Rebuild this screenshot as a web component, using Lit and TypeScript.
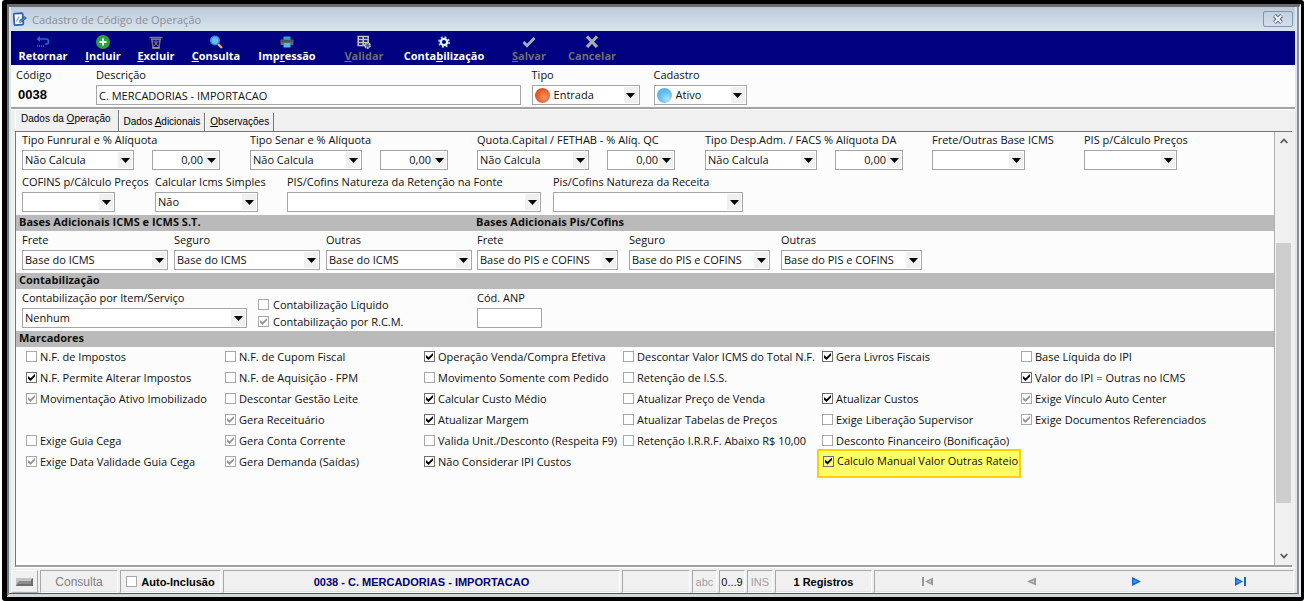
import { LitElement, html, css, svg, nothing } from "lit";
import { customElement } from "lit/decorators.js";
import { classMap } from "lit/directives/class-map.js";

type Mark = [label: string, state: "off" | "on" | "grey"] | null;

const MARKS: Mark[][] = [
  [["N.F. de Impostos", "off"], ["N.F. Permite Alterar Impostos", "on"], ["Movimentação Ativo Imobilizado", "grey"], null, ["Exige Guia Cega", "off"], ["Exige Data Validade Guia Cega", "grey"]],
  [["N.F. de Cupom Fiscal", "off"], ["N.F. de Aquisição - FPM", "off"], ["Descontar Gestão Leite", "off"], ["Gera Receituário", "grey"], ["Gera Conta Corrente", "grey"], ["Gera Demanda (Saídas)", "grey"]],
  [["Operação Venda/Compra Efetiva", "on"], ["Movimento Somente com Pedido", "off"], ["Calcular Custo Médio", "on"], ["Atualizar Margem", "on"], ["Valida Unit./Desconto (Respeita F9)", "off"], ["Não Considerar IPI Custos", "on"]],
  [["Descontar Valor ICMS do Total N.F.", "off"], ["Retenção de I.S.S.", "off"], ["Atualizar Preço de Venda", "off"], ["Atualizar Tabelas de Preços", "off"], ["Retenção I.R.R.F. Abaixo R$ 10,00", "off"]],
  [["Gera Livros Fiscais", "on"], null, ["Atualizar Custos", "on"], ["Exige Liberação Supervisor", "off"], ["Desconto Financeiro (Bonificação)", "off"], ["Calculo Manual Valor Outras Rateio", "on"]],
  [["Base Líquida do IPI", "off"], ["Valor do IPI = Outras no ICMS", "on"], ["Exige Vínculo Auto Center", "grey"], ["Exige Documentos Referenciados", "grey"]],
];
const HIGHLIGHTED = "Calculo Manual Valor Outras Rateio";

const ICONS = {
  back: svg`<path d="M3 4h7.500a1.800 1.800 0 0 1 1.800 1.800v1.400A1.800 1.800 0 0 1 10.500 9H9" fill="none" stroke="#1c6fc4" stroke-width="1.600"/><path d="M0.500 4 4 1v6z" fill="#1c6fc4"/><path d="M1 11h8" stroke="#1c5fb4" stroke-width="2" stroke-dasharray="1 1"/>`,
  add: svg`<circle cx="7" cy="7" r="7" fill="#2ea043"/><path d="M7 3.500v7M3.500 7h7" stroke="#fff" stroke-width="2"/>`,
  trash: svg`<path d="M.5 2.500h13M2 4.200h10M3 5l1 8h6l1-8" fill="none" stroke="#777" stroke-width="1.500"/><path d="m4 5.500 5.500 6M10 5.500l-5.500 6M7 5v3" stroke="#8a8a8a" stroke-width="1"/><path d="M3.500 12.800h7" stroke="#999" stroke-width="1.500"/>`,
  search: svg`<path d="m9 9 4 4" stroke="#e8b94a" stroke-width="2.400"/><circle cx="6" cy="5.500" r="4.300" fill="#6cb8f5" stroke="#2f86dd" stroke-width="1.400"/>`,
  print: svg`<path d="M3.500 1.500h7V5h-7z" fill="#39a0c8"/><path d="M.5 4.500h13v5.500H.5z" fill="#5d6670"/><path d="M3.500 8h7v4.500h-7z" fill="#58b9e6"/><path d="M1.500 6h11" stroke="#3d444c"/>`,
  validate: svg`<path d="M1.200 1.500h10v9h-10zM1.200 4.500h10M1.200 7.500h10M6.200 1.500v9" fill="none" stroke="#c4c4c4" stroke-width="1.500"/><circle cx="10.500" cy="10.500" r="2.500" fill="#555c8c" stroke="#bdbdbd" stroke-width="1.800" stroke-dasharray="2 .6"/>`,
  gear: svg`<circle cx="7" cy="7" r="4.900" fill="none" stroke="#8fd0f5" stroke-width="2" stroke-dasharray="1.950 1.900"/><circle cx="7" cy="7" r="3.200" fill="none" stroke="#e6f5ff" stroke-width="2.200"/>`,
  check: svg`<path d="m1.500 7 3.500 3.700L12.500 3" fill="none" stroke="#a9adb0" stroke-width="2.800"/>`,
  cross: svg`<path d="M2 1.500 12 12M12 1.500 2 12" stroke="#a9adb0" stroke-width="3.200"/>`,
};

const TOOLS: [keyof typeof ICONS, string, string, string, boolean][] = [
  ["back", "Retornar", "", "", true],
  ["add", "", "I", "ncluir", true],
  ["trash", "", "E", "xcluir", true],
  ["search", "", "C", "onsulta", true],
  ["print", "Imp", "r", "essão", true],
  ["validate", "", "V", "alidar", false],
  ["gear", "Conta", "b", "ilização", true],
  ["check", "", "S", "alvar", false],
  ["cross", "Cancelar", "", "", false],
];

@customElement("app-root")
export class AppRoot extends LitElement {
  static styles = css`
    :host {
      display: block;
      box-sizing: border-box;
      height: 100vh;
      padding-left: 2px;
      background: #fff;
      color: #101010;
      font: 11px/16px "Open Sans", "Noto Sans", sans-serif;
    }
    *, *::before { box-sizing: border-box; }
    button, input, select { font: inherit; color: inherit; margin: 0; }
    button { border: 0; padding: 0; background: none; }
    svg { display: block; }
    .frame { height: 100%; border: solid #000; border-width: 4px 3px 4px 5px; border-radius: 3px; background: #f4f4f4; }
    .edge { height: 100%; border: solid; border-width: 3px 2px 3px 2px; border-color: #6c6c6c #f0f0ee #d5d9d8 #777; }
    .window {
      height: 100%;
      display: flex;
      flex-direction: column;
      border-right: 2px solid #8d9096;
      border-bottom: 1px solid #4c5c62;
      padding: 0 2px 2px;
      background: #dbe5f2;
    }
    .title { flex: none; display: flex; align-items: center; gap: 5px; height: 24px; padding: 0 2px; background: linear-gradient(#bccad9, #d8e4f1); color: #8b8f96; }
    .title h1 { flex: 1; margin: 0; padding-top: 2px; font-size: 11px; font-weight: 400; }
    .close { display: grid; place-items: center; width: 30px; height: 16px; border: 1px solid #8296ad; border-radius: 2px; }
    .tools { flex: none; display: grid; grid-template-columns: 64px 56px 50px 70px 72px 82px 78px 92px 34px; height: 34px; background: #000080; color: #fff; font: bold 11px/14px "Open Sans", sans-serif; }
    .tool { display: flex; flex-direction: column; align-items: center; justify-content: flex-end; padding-bottom: 2px; white-space: nowrap; }
    .tool.off { color: #6d6d78; }
    .main { flex: 1; min-height: 0; display: flex; flex-direction: column; background: #f0f0f0; }
    .head { flex: none; display: grid; grid-template-columns: 80px minmax(0, 436fr) 122px minmax(0, 93px) minmax(0, 544fr); padding: 3px 5px; background: #fcfcfc; height: 44px; border-bottom: 2px solid #a3a3a3; }
    .code { padding: 0 2px; font: bold 13px/20px "Liberation Sans", sans-serif; color: #000; }
    .field { display: flex; flex-direction: column; min-width: 0; align-items: flex-start; }
    .field label { white-space: nowrap; height: 17px; line-height: 14px; }
    .text { height: 20px; border: 1px solid #a6a6a6; padding: 0 2px; background: #fff; border-radius: 0; width: 100%; }
    .w64 { width: 65px; } .w68 { width: 68px; } .w93 { width: 93px; } .w103 { width: 103px; } .w108 { width: 108px; }
    .w112 { width: 112px; } .w140 { width: 141px; } .w146 { width: 146px; } .w190 { width: 190px; } .w224 { width: 225px; } .w254 { width: 254px; } .w425 { width: calc(100% - 11px); }
    .combo { display: grid; grid-template-columns: auto minmax(0, 1fr) 14px; align-items: center; height: 20px; border: 1px solid #a6a6a6; background: #fff; padding: 0 1px 0 0; }
    .combo select { grid-area: 1 / 2 / 2 / 4; appearance: none; border: 0; border-radius: 0; background: none; height: 18px; line-height: 16px; padding: 0 15px 0 2px; width: 100%; }
    .combo.num select { text-align-last: right; }
    .combo .arrow { grid-area: 1 / 3; pointer-events: none; background: #f0f0f0; height: 16px; display: grid; place-items: center; }
    .ball { grid-area: 1 / 1; width: 15px; height: 15px; margin: 0 2px; border-radius: 50%; }
    .orange { background: radial-gradient(circle at 62% 62%, #f59a70 0, #f06a35 40%, #dd4f1c 75%); }
    .blue { background: radial-gradient(circle at 68% 72%, #b5e4fa 0, #6cc5f1 40%, #52b2e8 75%); }
    .tabs { flex: none; display: flex; align-items: flex-end; height: 22px; padding: 0 4px; border-top: 1px solid #fff; font: 10px/16px "Liberation Sans", sans-serif; color: #000; }
    .tab { height: 18px; padding: 0 4px; border-right: 1px solid #777; border-left: 1px solid #fff; white-space: nowrap; }
    .tab.sel { height: 21px; padding: 0 7px 4px 5px; }
    .pane { flex: 1; min-height: 0; display: flex; margin: 0 3px 0 4px; border: solid; border-width: 1px 0 2px 1px; border-color: #777 #a0a0a0 #a0a0a0 #777; background: #fcfcfc; }
    .scroll { flex: 1; min-width: 0; overflow: hidden; border-right: 1px solid #b0b0b0; }
    .row { display: grid; padding: 1px 0 3px 6px; }
    .row.a { grid-template-columns: minmax(0, 228fr) minmax(0, 227fr) minmax(0, 228fr) minmax(0, 227fr) minmax(0, 152fr) minmax(0, 190fr); height: 42px; }
    .row.b { grid-template-columns: minmax(0, 133fr) minmax(0, 132fr) minmax(0, 266fr) minmax(0, 721fr); height: 41px; }
    .row.c { grid-template-columns: minmax(0, 152fr) minmax(0, 152fr) minmax(0, 151fr) minmax(0, 152fr) minmax(0, 152fr) minmax(0, 493fr); height: 42px; padding-top: 2px; }
    .row.d { grid-template-columns: minmax(0, 236fr) minmax(0, 219fr) minmax(0, 797fr); height: 42px; padding: 2px 0 1px 6px; }
    .pair { display: flex; gap: 18px; }
    .bar { display: grid; grid-template-columns: minmax(0, 457fr) minmax(0, 798fr); height: 16px; margin: 0; padding-left: 3px; background: #bababa; font: bold 11px/14px "Open Sans", sans-serif; }
    .bar h2 { margin: 0; font: inherit; white-space: nowrap; }
    .stack { display: flex; flex-direction: column; justify-content: flex-end; }
    .stack .chk { height: 17px; }
    .chk { display: flex; align-items: center; gap: 4px; white-space: nowrap; height: 21px; }
    .chk input { flex: none; appearance: none; display: grid; place-items: center; width: 11px; height: 11px; border: 1px solid #a8a8a8; background: #fff; }
    .chk input:checked { border-color: #707070; }
    .chk input:checked::before { content: ""; width: 7px; height: 7px; background: #000; clip-path: polygon(0 30%, 36% 62%, 100% 0, 100% 36%, 36% 100%, 0 68%); }
    .chk input.grey { border-color: #a8a8a8; }
    .chk input.grey::before { background: #969696; }
    .marks { display: grid; grid-template-columns: repeat(5, minmax(0, 199fr)) minmax(0, 253fr); padding-left: 10px; margin-top: -1px; }
    .marks .chk { gap: 3px; }
    .slot { height: 21px; }
    .hot { width: 204px; height: 29px; margin: -2px 0 0 -5px; padding: 0 0 0 4px; border: 2px solid #fcd000; background: #ffff66; }
    .hot .chk { height: 20px; }
    .hot input { background: #ffff8c; }
    .vbar { flex: none; display: grid; grid-template-rows: 18px minmax(0, 93fr) minmax(0, 261fr) minmax(0, 44fr) 18px; width: 17px; padding: 0 1px; background: #f0f0f0; }
    .vbar button { display: grid; place-items: center; }
    .thumb { background: #cdcdcd; grid-row: 3; }
    .vbar .down { grid-row: 5; }
    .status { flex: none; display: grid; grid-template-columns: 27px 78px 101px minmax(0, 396fr) 68px 25px 26px 26px 97px minmax(0, 419fr); gap: 2px; height: 24px; padding: 2px 1px 0 0; font: 11px/18px "Liberation Sans", sans-serif; background: #f0f0f0; border-top: 1px solid #fff; }
    .cell { display: flex; align-items: center; justify-content: center; border: solid; border-width: 1px; border-color: #a8a8a8 #fff #fff #a8a8a8; white-space: nowrap; }
    .cell.up { border-color: #fff #a8a8a8 #a8a8a8 #fff; }
    .faint { color: #a0a0a0; } .mid { color: #808080; font-size: 12px; } .strong { font-weight: bold; color: #000; } .navy { color: #000080; }
    .nav button { flex: 1; display: grid; place-items: center; height: 100%; }
  `;

  private combo(id: string, width: string, value: string, label?: string, ball = "") {
    return html`<div class=${`combo ${width} ${value === "0,00" ? "num" : ""}`}>
      ${ball ? html`<span class=${`ball ${ball}`}></span>` : nothing}
      <select id=${id} aria-label=${label ?? nothing}><option>${value}</option></select>
      <span class="arrow"><svg width="9" height="5" viewBox="0 0 9 5"><path d="M0 0h9L4.500 5z" fill="#000"/></svg></span>
    </div>`;
  }

  private field(id: string, label: string, width: string, value = "", ball = "") {
    return html`<div class="field"><label for=${id}>${label}</label>${this.combo(id, width, value, undefined, ball)}</div>`;
  }

  private rate(id: string, label: string) {
    return html`<div class="field"><label for=${id}>${label}</label>
      <div class="pair">${this.combo(id, "w112", "Não Calcula")}${this.combo(id + "-pct", "w68", "0,00", label + " %")}</div></div>`;
  }

  private check(label: string, state: string) {
    return html`<label class="chk"><input type="checkbox" class=${classMap({ grey: state === "grey" })} ?checked=${state !== "off"}><span>${label}</span></label>`;
  }

  private mark(m: Mark) {
    if (!m) return html`<div class="slot"></div>`;
    return m[0] === HIGHLIGHTED ? html`<div class="hot">${this.check(...m)}</div>` : this.check(...m);
  }

  render() {
    return html`<div class="frame"><div class="edge"><div class="window">
      <header class="title">
        <svg width="14" height="14" viewBox="0 0 14 14"><rect x="1" y="1.500" width="9" height="11.500" rx="1" fill="#fff" stroke="#2f62a8" stroke-width="1.800" transform="rotate(-4 5 7)"/><path d="M3.500 9.500 6 4.500" stroke="#7ab2e8" stroke-width="1.600"/><path d="m6 11 1-3 5-3.500 1.500 1.800L8.500 10z" fill="#4b7fc4" stroke="#27508c" stroke-width=".6"/><path d="m6 11 .8-2.500 1.500 1.400z" fill="#f0c060"/></svg>
        <h1>Cadastro de Código de Operação</h1>
        <button class="close" aria-label="Fechar"><svg width="12" height="10" viewBox="0 0 12 10"><path d="m2.500 1.500 7 7M9.500 1.500l-7 7" stroke="#626d7c" stroke-width="4"/><path d="m2.800 1.800 6.400 6.400M9.200 1.800 2.800 8.200" stroke="#f3f6fa" stroke-width="2"/></svg></button>
      </header>
      <nav class="tools">${TOOLS.map(([icon, a, key, b, on]) => html`<button class=${classMap({ tool: true, off: !on })}>
        <svg width="14" height="14" viewBox="0 0 14 14">${ICONS[icon]}</svg><span>${a}${key ? html`<u>${key}</u>` : nothing}${b}</span></button>`)}</nav>
      <main class="main">
        <section class="head">
          <div class="field"><label for="codigo">Código</label><output id="codigo" class="code">0038</output></div>
          <div class="field"><label for="descricao">Descrição</label><input id="descricao" class="text w425" value="C. MERCADORIAS - IMPORTACAO"></div>
          ${this.field("tipo", "Tipo", "w108", "Entrada", "orange")}
          ${this.field("cadastro", "Cadastro", "w93", "Ativo", "blue")}
        </section>
        <div class="tabs" role="tablist">
          <button class="tab sel" role="tab" aria-selected="true">Dados da <u>O</u>peração</button>
          <button class="tab" role="tab">Dados <u>A</u>dicionais</button>
          <button class="tab" role="tab"><u>O</u>bservações</button>
        </div>
        <div class="pane">
          <div class="scroll">
            <div class="row a">
              ${this.rate("funrural", "Tipo Funrural e % Alíquota")}
              ${this.rate("senar", "Tipo Senar e % Alíquota")}
              ${this.rate("quota", "Quota.Capital / FETHAB - % Alíq. QC")}
              ${this.rate("desp", "Tipo Desp.Adm. / FACS % Alíquota DA")}
              ${this.field("frete-base", "Frete/Outras Base ICMS", "w93")}
              ${this.field("pis", "PIS p/Cálculo Preços", "w93")}
            </div>
            <div class="row b">
              ${this.field("cofins", "COFINS p/Cálculo Preços", "w93")}
              ${this.field("simples", "Calcular Icms Simples", "w103", "Não")}
              ${this.field("retencao", "PIS/Cofins Natureza da Retenção na Fonte", "w254")}
              ${this.field("receita", "Pis/Cofins Natureza da Receita", "w190")}
            </div>
            <div class="bar"><h2>Bases Adicionais ICMS e ICMS S.T.</h2><h2>Bases Adicionais Pis/Cofins</h2></div>
            <div class="row c">
              ${["Frete", "Seguro", "Outras"].map((l) => this.field("icms-" + l, l, "w146", "Base do ICMS"))}
              ${["Frete", "Seguro", "Outras"].map((l) => this.field("pc-" + l, l, "w140", "Base do PIS e COFINS"))}
            </div>
            <div class="bar"><h2>Contabilização</h2></div>
            <div class="row d">
              ${this.field("contab", "Contabilização por Item/Serviço", "w224", "Nenhum")}
              <div class="stack">${this.check("Contabilização Líquido", "off")}${this.check("Contabilização por R.C.M.", "grey")}</div>
              <div class="field"><label for="anp">Cód. ANP</label><input id="anp" class="text w64"></div>
            </div>
            <div class="bar"><h2>Marcadores</h2></div>
            <div class="marks">${MARKS.map((col) => html`<div>${col.map((m) => this.mark(m))}</div>`)}</div>
          </div>
          <div class="vbar">
            <button aria-label="Rolar para cima"><svg width="8" height="6" viewBox="0 0 8 6"><path d="m.7 5 3.300-3.500L7.300 5" fill="none" stroke="#555" stroke-width="1.800"/></svg></button>
            <div class="thumb"></div>
            <button class="down" aria-label="Rolar para baixo"><svg width="8" height="6" viewBox="0 0 8 6"><path d="m.7 1 3.300 3.500L7.300 1" fill="none" stroke="#555" stroke-width="1.800"/></svg></button>
          </div>
        </div>
        <footer class="status">
          <button class="cell up" aria-label="Painel"><svg width="17" height="8" viewBox="0 0 17 8"><path d="M0 0h17v8H0z" fill="#8c8c8c"/><path d="M0 0h17l-2 3H3L0 7z" fill="#c4c4c4"/><path d="M17 0v8H0l3-2h12V2z" fill="#6c6c6c"/></svg></button>
          <div class="cell mid">Consulta</div>
          <div class="cell strong">${this.check("Auto-Inclusão", "off")}</div>
          <div class="cell strong navy">0038 - C. MERCADORIAS - IMPORTACAO</div>
          <div class="cell"></div>
          <div class="cell faint">abc</div>
          <div class="cell">0...9</div>
          <div class="cell faint">INS</div>
          <div class="cell strong">1 Registros</div>
          <div class="cell nav">
            <button aria-label="Primeiro"><svg width="11" height="9" viewBox="0 0 11 9"><path d="M0 0h2v9H0zM11 .5v8l-8-4z" fill="#9a9a9a"/><path d="M9 3v3L6 4.500z" fill="#c8c8c8"/></svg></button>
            <button aria-label="Anterior"><svg width="9" height="9" viewBox="0 0 9 9"><path d="M9 .5v8l-9-4z" fill="#9a9a9a"/><path d="M7 3v3L4 4.500z" fill="#c8c8c8"/></svg></button>
            <button aria-label="Próximo"><svg width="9" height="9" viewBox="0 0 9 9"><path d="M0 0v9l9-4.500z" fill="#1464d2"/><path d="M1.500 2.500v4L6 4.500z" fill="#3aa0f5"/></svg></button>
            <button aria-label="Último"><svg width="11" height="9" viewBox="0 0 11 9"><path d="M0 0v9l8-4.500zM9 0h2v9H9z" fill="#1464d2"/><path d="M1.500 2.500v4L6 4.500z" fill="#3aa0f5"/></svg></button>
          </div>
        </footer>
      </main>
    </div></div></div>`;
  }
}
